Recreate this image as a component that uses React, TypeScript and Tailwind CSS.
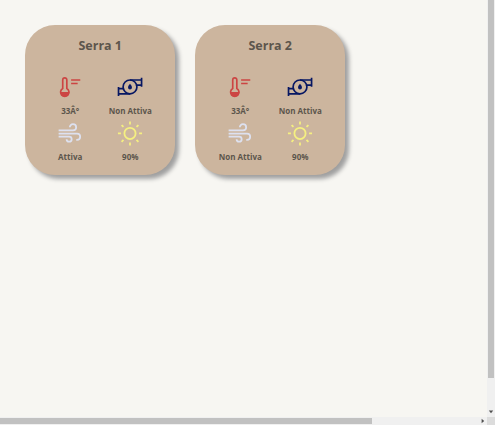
import React from "react";

function Thermometer() {
  return (
    <svg className="h-[30px] w-[30px]" viewBox="0 0 30 30" fill="none" stroke="#cc4543" strokeWidth="1.8">
      <path d="M7.2 15.6V6.3a2.2 2.2 0 0 1 4.4 0v9.3a4.5 4.5 0 1 1-4.4 0Z" />
      <path d="M4.4 19.2h10a5 5 0 0 1-10 0Z" fill="#cc4543" stroke="none" />
      <path d="M16.2 6.5h9.8M16.2 10.1h7" strokeWidth="1.7" />
    </svg>
  );
}

function Pump() {
  return (
    <svg className="h-[30px] w-[30px]" viewBox="0 0 30 30" fill="none" stroke="#071763" strokeWidth="1.8">
      <circle cx="15" cy="13.8" r="7.4" />
      <path d="M15 6.4h11.8M21.3 11.9h5.5M15 21.2H3.2M8.7 15.7H3.2" />
      <path d="M27.4 4.1v9.5M2.7 14v9.5" />
      <path d="M15 10.5c1.1 1.4 2.1 2.5 2.1 3.9a2.1 2.1 0 0 1-4.2 0c0-1.4 1-2.5 2.1-3.9Z" fill="#071763" stroke="none" />
    </svg>
  );
}

function Wind() {
  return (
    <svg className="h-[30px] w-[30px]" viewBox="0 0 30 30" fill="none" stroke="#dde1f0" strokeWidth="1.9">
      <path d="M2.8 11.2h15.4a3.4 3.4 0 1 0-3.4-3.4" />
      <path d="M2.8 14.5h19.7a3.4 3.4 0 0 1 0 6.8h-.8" />
      <path d="M2.8 17.8h11.3a2.7 2.7 0 1 1-2.7 2.7" />
    </svg>
  );
}

function Sun() {
  return (
    <svg className="h-[30px] w-[30px]" viewBox="0 0 30 30" fill="none" stroke="#f5f080" strokeWidth="1.9">
      <circle cx="15" cy="14.4" r="6" />
      <path d="M15 1.5v3.2M15 24.1v3.2M2.1 14.4h3.2M24.7 14.4h3.2M6 5.4l2 2M22 21.4l2 2M6 23.4l2-2M22 7.4l2-2" />
    </svg>
  );
}

function Reading({ icon, label }: { icon: React.ReactNode; label: string }) {
  return (
    <div className="flex h-[46px] w-[60px] flex-col items-center">
      {icon}
      <span className="whitespace-nowrap pl-[0.5px] text-[8px] leading-[18px]">{label}</span>
    </div>
  );
}

function Greenhouse({ name, fan }: { name: string; fan: string }) {
  return (
    <section className="h-[150px] w-[150px] rounded-[30px] bg-[#ccb59e] px-[15px] pt-[10px] font-bold text-[#5c554c] shadow-[4px_4px_4px_#a0a0a0]">
      <h2 className="h-[39px] pl-[0.5px] text-center text-[12.5px] leading-[21px]">{name}</h2>
      <div className="grid grid-cols-2">
        <Reading icon={<Thermometer />} label="33Â°" />
        <Reading icon={<Pump />} label="Non Attiva" />
        <Reading icon={<Wind />} label={fan} />
        <Reading icon={<Sun />} label="90%" />
      </div>
    </section>
  );
}

export default function App() {
  return (
    <div className="grid h-[425px] w-[495px] grid-cols-[487px_8px] grid-rows-[417px_8px] overflow-hidden bg-[#f7f6f2] font-['Open_Sans','Noto_Sans',sans-serif]">
      <main className="flex items-start gap-5 p-[25px]">
        <Greenhouse name="Serra 1" fan="Attiva" />
        <Greenhouse name="Serra 2" fan="Non Attiva" />
      </main>
      <div className="flex flex-col items-center justify-between bg-[#f0f0f0] pb-[3px]">
        <div className="h-[378px] w-[6px] bg-[#c1c1c1]" />
        <svg className="h-[4px] w-[6px]" viewBox="0 0 6 4"><path d="M.8.5h4.4L3 3.2Z" fill="#505050" /></svg>
      </div>
      <div className="flex items-center justify-between bg-[#f0f0f0] pr-[2px]">
        <div className="h-[6px] w-[371.5px] bg-[#c1c1c1]" />
        <svg className="h-[6px] w-[4px]" viewBox="0 0 4 6"><path d="M.6.8v4.4L3.2 3Z" fill="#505050" /></svg>
      </div>
      <div className="bg-[#dcdcdc]" />
    </div>
  );
}
